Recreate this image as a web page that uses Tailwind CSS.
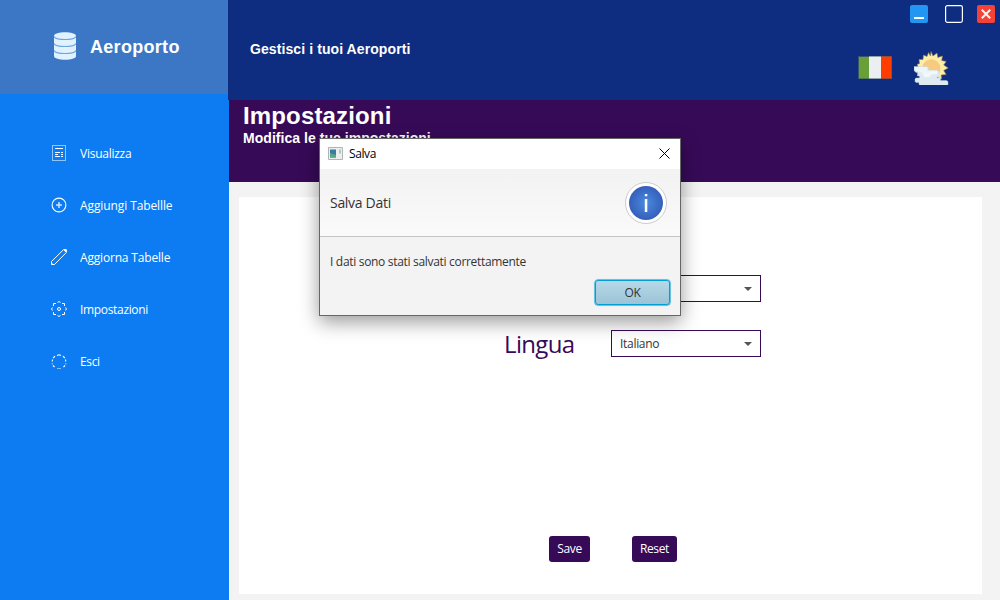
<!DOCTYPE html>
<html lang="it">
<head>
<meta charset="utf-8">
<title>Aeroporto</title>
<script src="https://cdn.jsdelivr.net/npm/@tailwindcss/browser@4"></script>
</head>
<body class="relative flex h-[600px] w-[1000px] overflow-hidden bg-[#f3f3f3] font-['Open_Sans',sans-serif] text-xs">
<aside class="flex w-[229px] shrink-0 flex-col bg-[#0d7cf2] text-white">
  <div class="flex h-[94px] items-center bg-[#3c77c5] pl-[54px]">
    <svg class="mb-0.5 h-7 w-[22px] shrink-0" viewBox="0 0 22 28" fill="#e0f1ff"><path d="M0 4C0-1 22-1 22 4V24C22 29 0 29 0 24Z"/><g fill="none" stroke="#6ba6dc" stroke-width="1.1"><path d="M0 4.500C2 8.500 20 8.500 22 4.500M0 11.500C2 15.500 20 15.500 22 11.500M0 18.500C2 22.500 20 22.500 22 18.500"/></g></svg>
    <span class="ml-3.5 whitespace-nowrap font-['Liberation_Sans',sans-serif] text-lg font-bold leading-6 tracking-[0.3px]">Aeroporto</span>
  </div>
  <nav class="flex flex-col gap-7 pt-12 pl-[51px] leading-6">
    <a class="flex h-6 items-center gap-[13px] tracking-[-0.25px] whitespace-nowrap"><svg class="mb-0.5 size-4 shrink-0" viewBox="0 0 16 16" fill="none" stroke="white" shape-rendering="crispEdges"><path d="M1.500 .5h13v15h-13z" opacity=".55"/><path d="M4 3.500h8M4 7.500h5M4 9.500h3M4 11.500h5M10 7.500h2M10 9.500h2M10 11.500h2"/></svg>Visualizza</a>
    <a class="flex h-6 items-center gap-[13px] tracking-[-0.1px] whitespace-nowrap"><svg class="mb-0.5 size-4 shrink-0" viewBox="0 0 16 16" fill="none" stroke="white"><circle cx="8" cy="8" r="6.900" stroke-width="1.100"/><path d="M5 8h6M8 5v6" stroke-width="1.500" opacity=".8"/></svg>Aggiungi Tabellle</a>
    <a class="flex h-6 items-center gap-[13px] tracking-[-0.18px] whitespace-nowrap"><svg class="mb-0.5 size-4 shrink-0" viewBox="0 0 16 16" fill="none" stroke="white"><path d="M.5 15.500V12.500L12.500.7h2.800V3.500L3.500 15.500Z"/><path d="M13 .5h2.500V3L14.500 3 13 1.500ZM.5 13.500l2 2h-2z" fill="white" stroke="none"/></svg>Aggiorna Tabelle</a>
    <a class="flex h-6 items-center gap-[13px] tracking-[-0.33px] whitespace-nowrap"><svg class="mb-0.5 size-4 shrink-0" viewBox="0 0 16 16" fill="none" stroke="white"><circle cx="8" cy="8" r="1.500"/><path d="M6.500 1.500 8 .5l1.500 1M11 2.500h2.500V5M14.500 6.500l1 1.500-1 1.500M13.500 11v2.500H11M9.500 14.500 8 15.500l-1.500-1M5 13.500H2.500V11M1.500 9.500.5 8l1-1.500M2.500 5V2.500H5"/></svg>Impostazioni</a>
    <a class="flex h-6 items-center gap-[13px] tracking-[-0.35px] whitespace-nowrap"><svg class="size-4 shrink-0" viewBox="0 0 16 16" fill="none" stroke="white" stroke-width="1.100"><path d="M6 1.500 8 .8l2 .7M12 2.200l1.800 1.800M14.500 5.500l.3 2M3.500 13 2 11.500M1.200 7.500 1.500 5.500M2.200 4 4 2.200M12.500 13l1.500-1.500"/><path d="M6 14.500h4M1 9l.5 1.500M15 9l-.5 1.500" opacity=".5"/></svg>Esci</a>
  </nav>
</aside>
<main class="flex min-w-0 flex-1 flex-col">
  <header class="-ml-px flex h-[100px] shrink-0 justify-between bg-[#0e2c80] font-['Liberation_Sans',sans-serif] text-white">
    <p class="pt-[39px] pl-[22px] text-sm font-bold leading-5 tracking-[0.09px] whitespace-nowrap">Gestisci i tuoi Aeroporti</p>
    <div class="flex w-[142px] flex-col">
      <div class="flex pt-[5px] pl-[52px]">
        <svg class="h-[18px] w-[18px]" viewBox="0 0 18 18"><rect width="18" height="18" rx="2" fill="#2196f3"/><path d="M4 12h10v2H4z" fill="white"/></svg>
        <svg class="ml-[17px] h-[18px] w-[18px]" viewBox="0 0 18 18"><rect x=".6" y=".6" width="16.800" height="16.800" rx="1.800" fill="none" stroke="white" stroke-width="1.200"/></svg>
        <svg class="ml-3.5 h-[18px] w-[18px]" viewBox="0 0 18 18"><rect width="18" height="18" rx="2" fill="#f44336"/><path d="m4.800 4.800 8.400 8.400m0-8.400-8.400 8.400" stroke="#fff1ef" stroke-width="2"/></svg>
      </div>
      <div class="flex items-start pt-7">
        <svg class="mt-[5px] h-[23px] w-[34px]" viewBox="0 0 34 23"><path fill="#35566c" d="M0 0h34v23H0z"/><path fill="#689f38" d="M1 1h10v21.500H1z"/><path fill="#eceff1" d="M11 .5h12v22H11z"/><path fill="#ff3d00" d="M23 .5h10.500v22H23z"/></svg>
        <svg class="ml-[22px] h-[34px] w-[35px]" viewBox="0 0 35 34"><path d="M17 .5l2 4.500 4-3 .8 4.500 4.700-1.500-.8 4.500 4.500 1-2.500 3.500 4.500 3-4.500 2.500 2.500 4-5 .5.500 4-4.500-1.500L17 30l-6-4-5-2-2-3.500 1-3-2-4 2.500-1-.5-4h4l.5-4.500 3.500 1.500 1.500-4 2 3.500Z" fill="#ffeca5" stroke="#8b7b54" stroke-width=".6"/><circle cx="17.300" cy="17.500" r="9.200" fill="#f6cb80"/><path d="M0 15.500h13l1.500 1v3h9l1.500 1v5h-2v1.500h3.500v2.500h6l1.500 1v3l-1 1H6.500L5 33.500V31.500H2l-1-1V28l1-1h3.500v-2H3.500V21.500H2l-2-2Z" fill="#dfeaf1" stroke="#c3d3dc" stroke-width=".4"/><path d="M1 16h12v3.500h10v3H15l-3 2H9l-1-3-7-2Z" fill="#ecf5fa"/><path d="M10 22h5l2-1.500h6V23h-5l-3 3h-5Z" fill="#f2f9fd"/></svg>
      </div>
    </div>
  </header>
  <section class="flex h-[82px] shrink-0 flex-col bg-[#370a58] pl-3.5 font-['Liberation_Sans',sans-serif] font-bold text-white">
    <h1 class="pt-0.5 text-2xl leading-7 tracking-[0.15px] whitespace-nowrap">Impostazioni</h1>
    <p class="text-sm leading-4 tracking-[0.04px] whitespace-nowrap">Modifica le tue impostazioni</p>
  </section>
  <section class="mt-[15px] mr-[18px] ml-2.5 flex h-[397px] flex-col bg-white">
    <div class="mt-[78px] mr-[221px] ml-auto flex h-[27px] w-[150px] items-center justify-end border border-[#370a58] pr-2"><span class="mt-px border-x-[4.500px] border-t-[4px] border-x-transparent border-t-[#555]"></span></div>
    <div class="mt-7 flex h-[27px] items-center pl-[265px]">
      <span class="w-[107px] text-2xl leading-7 tracking-[-0.65px] whitespace-nowrap text-[#370a58]">Lingua</span>
      <div class="flex h-[27px] w-[150px] items-center justify-between border border-[#370a58] pr-2 pl-2 tracking-[-0.3px] text-[#333]"><span>Italiano</span><span class="mt-px border-x-[4.500px] border-t-[4px] border-x-transparent border-t-[#555]"></span></div>
    </div>
    <div class="mt-[179px] flex gap-[42px] pl-[310px] tracking-[-0.35px] text-white">
      <button class="h-[26px] w-[41px] rounded-[3px] bg-[#370a58]">Save</button>
      <button class="h-[26px] w-[45px] rounded-[3px] bg-[#370a58]">Reset</button>
    </div>
  </section>
</main>
<div class="absolute top-[138px] left-[319px] flex h-[178px] w-[362px] flex-col border border-[#666] bg-[#f3f3f3] text-[#333] shadow-[0_6px_18px_rgba(0,0,0,0.4)]">
  <div class="flex h-[30px] shrink-0 items-center bg-white pl-2 text-black">
    <svg class="mb-0.5 h-[13px] w-[15px]" viewBox="0 0 15 13"><path d="M.5.500h14v12H.5z" fill="#eee" stroke="#aeb4b8"/><path d="M2 2.500h6v8H2z" fill="#397e9b"/><path d="M2 6l6 2v2.500H2z" fill="#5aa68b"/><path d="M11 2.500h2v4h-2z" fill="#a5ceba"/></svg>
    <span class="ml-1.5 text-xs tracking-[-0.4px]">Salva</span>
    <svg class="mr-2.5 mb-px ml-auto size-[11px]" viewBox="0 0 11 11"><path d="m.5.500 10 10m0-10-10 10" stroke="black"/></svg>
  </div>
  <div class="flex h-[68px] shrink-0 items-center justify-between border-b border-[#c5c5c5] bg-linear-to-b from-[#f2f2f2] to-[#fafafa] pr-[13px] pl-2.5">
    <span class="pt-0.5 text-[14px] tracking-[-0.3px]">Salva Dati</span>
    <svg class="size-[42px]" viewBox="0 0 42 42"><defs><radialGradient id="info"><stop stop-color="#4a8bdf"/><stop offset="1" stop-color="#355fba"/></radialGradient></defs><circle cx="21" cy="21" r="20.500" fill="white" stroke="#ccc"/><circle cx="21" cy="21" r="17" fill="url(#info)"/><path d="M19.800 12h2.500v2.200h-2.500zM19.800 17h2.500v13h-2.500z" fill="white"/></svg>
  </div>
  <p class="mt-4 pl-2.5 leading-[18px] tracking-[-0.31px] whitespace-nowrap">I dati sono stati salvati correttamente</p>
  <button class="mt-[9px] mr-2.5 ml-auto h-[25px] w-[75px] rounded-[3px] border border-[#039ed3] bg-linear-to-b from-[#b5d9e7] to-[#9cc3d6] tracking-[-0.3px] shadow-[0_0_0_0.5px_#039ed3,0_0_2px_#6cc9e8]">OK</button>
</div>
</body>
</html>
